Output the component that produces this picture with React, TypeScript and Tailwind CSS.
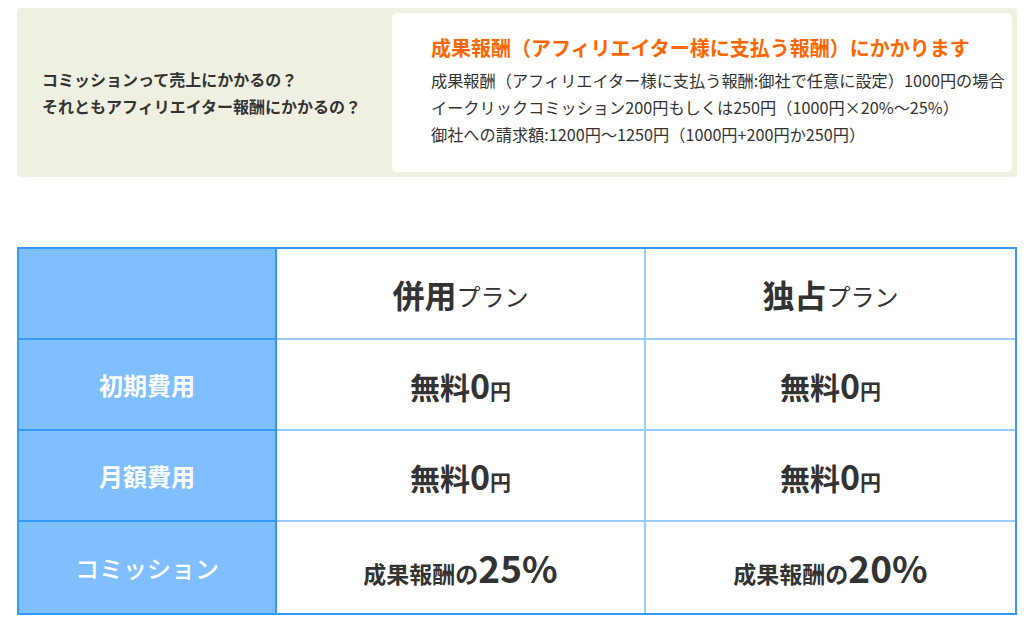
const jp = "font-['Noto_Sans_CJK_JP','Noto_Sans',sans-serif]";

const rows = [
  { label: "初期費用", a: "free", b: "free" },
  { label: "月額費用", a: "free", b: "free" },
  { label: "コミッション", a: "25%", b: "20%" },
];

function Free() {
  return (
    <span className="text-[#333]">
      <span className="text-[30px] font-bold">無料</span>
      <span className="text-[34px] font-bold">0</span>
      <span className="text-[21px] font-bold">円</span>
    </span>
  );
}

function Rate({ value }: { value: string }) {
  return (
    <span className="text-[#333]">
      <span className="text-[23px] font-bold">成果報酬の</span>
      <span className="text-[37px] font-bold">{value}</span>
    </span>
  );
}

export default function App() {
  return (
    <div className={`${jp} bg-white w-[1030px] h-[627px] pl-[17px] pr-[13px] pt-2`}>
      {/* Q & A box */}
      <div className="flex h-[169px] rounded-[4px] bg-[#efefe2] p-[5px] pl-0">
        <div className="flex w-[375px] items-center pl-[25px] text-[16px] font-bold leading-[27px] text-[#333]">
          <p>
            コミッションって売上にかかるの？
            <br />
            それともアフィリエイター報酬にかかるの？
          </p>
        </div>
        <div className="flex-1 rounded-[5px] bg-white pl-[39px] pt-[21px] text-[#333]">
          <p className="mb-[5px] text-[20px] font-bold leading-[28px] text-[#ff6600]">
            成果報酬（アフィリエイター様に支払う報酬）にかかります
          </p>
          <p className="text-[16.2px] leading-[27px]">
            成果報酬（アフィリエイター様に支払う報酬:御社で任意に設定）1000円の場合
            <br />
            イークリックコミッション200円もしくは250円（1000円×20%～25%）
            <br />
            御社への請求額:1200円～1250円（1000円+200円か250円）
          </p>
        </div>
      </div>

      {/* Plan table */}
      <div className="mt-[70px] grid grid-cols-[258px_1fr_1fr] border-2 border-[#3399ff]">
        <div className="h-[91px] border-r-2 border-b-2 border-[#3399ff] bg-[#80bfff]" />
        <div className="flex h-[91px] items-center justify-center border-r-2 border-b-2 border-[#99ccff] text-[#333]">
          <span className="text-[32px] font-bold">併用</span>
          <span className="mt-[5px] text-[24px]">プラン</span>
        </div>
        <div className="flex h-[91px] items-center justify-center border-b-2 border-[#99ccff] text-[#333]">
          <span className="text-[32px] font-bold">独占</span>
          <span className="mt-[5px] text-[24px]">プラン</span>
        </div>

        {rows.map((r, i) => {
          const last = i === rows.length - 1;
          return [
            <div
              key={r.label + "l"}
              className={`flex h-[91px] items-center justify-center border-r-2 border-[#3399ff] bg-[#80bfff] text-white ${
                last ? "text-[24px] font-medium" : "border-b-2 text-[24px] font-bold"
              }`}
            >
              {r.label}
            </div>,
            <div
              key={r.label + "a"}
              className={`flex h-[91px] items-center justify-center border-r-2 border-[#99ccff] ${last ? "" : "border-b-2"}`}
            >
              {r.a === "free" ? <Free /> : <Rate value={r.a} />}
            </div>,
            <div
              key={r.label + "b"}
              className={`flex h-[91px] items-center justify-center border-[#99ccff] ${last ? "" : "border-b-2"}`}
            >
              {r.b === "free" ? <Free /> : <Rate value={r.b} />}
            </div>,
          ];
        })}
      </div>
    </div>
  );
}
